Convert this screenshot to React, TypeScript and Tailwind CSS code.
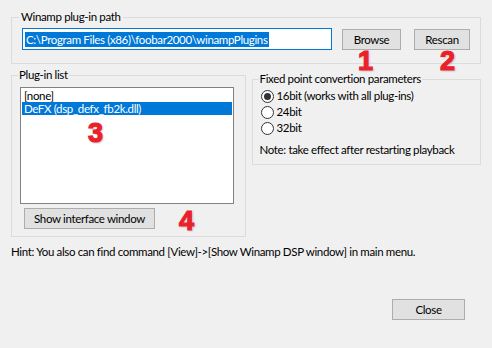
const Btn = ({ label, className }: { label: string; className: string }) => (
  <div
    className={
      "flex items-center justify-center bg-[#e1e1e1] border border-[#adadad] text-black " +
      className
    }
  >
    {label}
  </div>
);

const Radio = ({ label, checked }: { label: string; checked?: boolean }) => (
  <div className="flex items-center h-[16px]">
    <div className="w-[13px] h-[13px] rounded-full border border-[#333] bg-white flex items-center justify-center">
      {checked && <div className="w-[7px] h-[7px] rounded-full bg-[#333]" />}
    </div>
    <span className="ml-[3px]">{label}</span>
  </div>
);

const Num = ({ n, className }: { n: string; className: string }) => (
  <span
    className={
      "absolute leading-none text-[27px] font-bold font-['Liberation_Sans',Arial,sans-serif] tracking-normal text-[#e8212b] [-webkit-text-stroke:1.2px_#e8212b] [text-shadow:0_0_2px_#fff,0_0_2px_#fff,1px_1px_2px_rgba(0,0,0,0.35)] " +
      className
    }
  >
    {n}
  </span>
);

export default function App() {
  return (
    <div className="relative w-[492px] h-[348px] overflow-hidden bg-[#f0f0f0] font-['Lato',sans-serif] text-[11.5px] tracking-[-0.35px] leading-[14px] text-black flex flex-col px-[11px]">
      {/* path group */}
      <div className="mt-[17px] h-[47px] border border-[#dcdcdc] flex flex-col">
        <span className="-mt-[8px] ml-[7px] px-[2px] w-fit bg-[#f0f0f0]">Winamp plug-in path</span>
        <div className="flex items-start mt-[4px]">
          <div className="ml-[10px] w-[310px] h-[22px] border border-[#0078d7] bg-white flex items-center pl-[2px]">
            <span className="bg-[#0078d7] text-white px-[1px] leading-[15px]">
              C:\Program Files (x86)\foobar2000\winampPlugins
            </span>
          </div>
          <Btn label="Browse" className="ml-[10px] mt-[1px] w-[59px] h-[21px]" />
          <Btn label="Rescan" className="ml-[13px] mt-[1px] w-[56px] h-[21px]" />
        </div>
      </div>

      <div className="flex items-start mt-[11px] gap-[6px]">
        {/* plug-in list */}
        <div className="w-[235px] h-[162px] border border-[#dcdcdc] flex flex-col">
          <span className="-mt-[8px] ml-[6px] px-[1px] w-fit bg-[#f0f0f0]">Plug-in list</span>
          <div className="ml-[8px] mt-[5px] w-[214px] h-[117px] border border-[#828282] bg-white p-[1px] flex flex-col">
            <div className="h-[13px] leading-[13px] pl-[2px]">[none]</div>
            <div className="h-[13px] leading-[13px] pl-[2px] bg-[#0078d7] text-white">DeFX (dsp_defx_fb2k.dll)</div>
          </div>
          <Btn label="Show interface window" className="ml-[12px] mt-[4px] w-[131px] h-[21px]" />
        </div>

        {/* fixed point */}
        <div className="mt-[4px] w-[230px] h-[86px] border border-[#dcdcdc] flex flex-col">
          <span className="-mt-[8px] ml-[6px] px-[1px] w-fit bg-[#f0f0f0]">Fixed point convertion parameters</span>
          <div className="ml-[8px] mt-[2px] flex flex-col">
            <Radio label="16bit (works with all plug-ins)" checked />
            <Radio label="24bit" />
            <Radio label="32bit" />
          </div>
          <span className="ml-[7px] mt-[7px]">Note: take effect after restarting playback</span>
        </div>
      </div>

      <p className="mt-[8px]">Hint: You also can find command [View]-&gt;[Show Winamp DSP window] in main menu.</p>

      <div className="flex justify-end mt-[40px] pr-[16px]">
        <Btn label="Close" className="w-[73px] h-[21px]" />
      </div>

      <Num n="1" className="left-[358px] top-[48px]" />
      <Num n="2" className="left-[440px] top-[48px]" />
      <Num n="3" className="left-[88px] top-[120px]" />
      <Num n="4" className="left-[179px] top-[208px]" />
    </div>
  );
}
